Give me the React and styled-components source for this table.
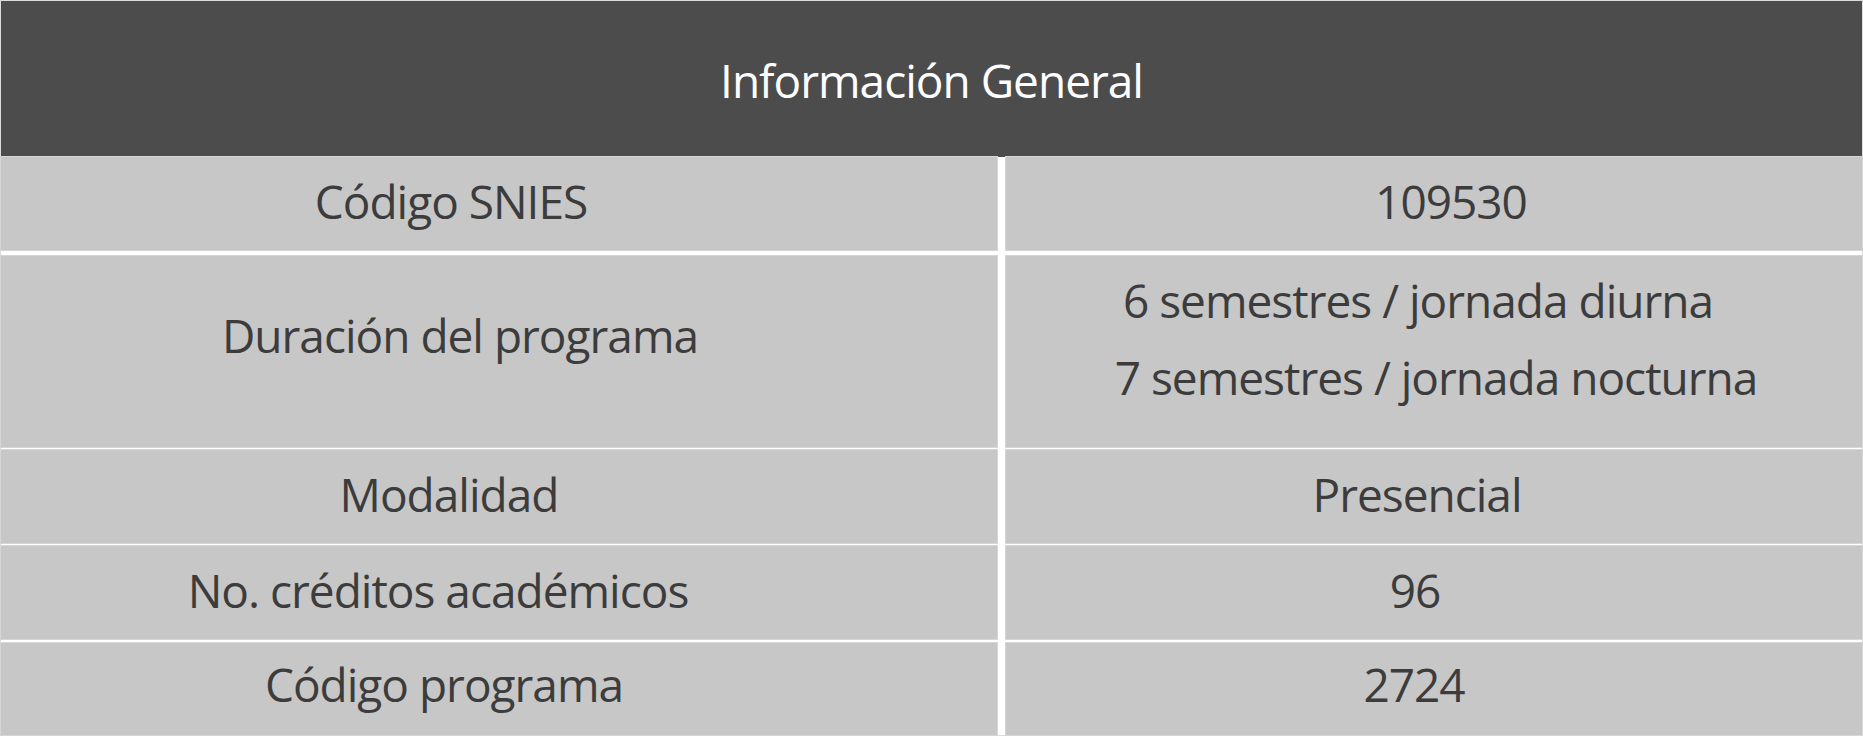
import React from "react";
import styled, { createGlobalStyle } from "styled-components";

const GlobalStyle = createGlobalStyle`
  html, body { margin: 0; padding: 0; background: #ffffff; }
  body { font-family: "Open Sans", "Liberation Sans", sans-serif; }
`;

const Table = styled.div`
  width: 1863px;
  box-sizing: border-box;
  border: 1px solid #dcdcdc;
  background: #ffffff;
  display: flex;
  flex-direction: column;
`;

const Header = styled.div`
  height: 156px;
  background: #4c4c4c;
  color: #ffffff;
  display: flex;
  align-items: center;
  justify-content: center;
  font-size: 46px;
  letter-spacing: -1px;
  padding-top: 2px;
  box-sizing: border-box;
`;

const Row = styled.div`
  display: grid;
  grid-template-columns: 996px 856px;
  column-gap: 9px;
  height: ${(p) => p.$h}px;
  margin-top: ${(p) => p.$gap}px;
`;

const Cell = styled.div`
  background: #c7c7c7;
  box-shadow: 0 0 0 1px #d6d6d6;
  color: #3c3c3c;
  font-size: 46px;
  letter-spacing: -1px;
  display: flex;
  flex-direction: column;
  align-items: center;
  justify-content: center;
  box-sizing: border-box;
  padding-left: ${(p) => Math.max(0, (p.$shift || 0) * 2)}px;
  padding-right: ${(p) => Math.max(0, -(p.$shift || 0) * 2)}px;
  padding-bottom: ${(p) => (p.$lift || 0) + 4}px;
`;

const Line = styled.span`
  display: block;
  line-height: 77px;
  white-space: nowrap;
  transform: translateX(${(p) => p.$dx || 0}px);
`;

const rows = [
  { h: 93, gap: 0, left: "Código SNIES", ls: -48, right: ["109530"], rs: 17 },
  {
    h: 191,
    gap: 6,
    left: "Duración del programa",
    ls: -39,
    right: ["6 semestres / jornada diurna", "7 semestres / jornada nocturna"],
    rs: -7,
    dx: [-9, 9],
    lift: 22,
    llift: 28,
  },
  { h: 93, gap: 3, left: "Modalidad", ls: -50, right: ["Presencial"], rs: -17 },
  { h: 93, gap: 3, left: "No. créditos académicos", ls: -61, right: ["96"], rs: -19 },
  { h: 92, gap: 4, left: "Código programa", ls: -55, right: ["2724"], rs: -20, lift: 6, llift: 6 },
];

export default function App() {
  return (
    <>
      <GlobalStyle />
      <Table>
        <Header>Información General</Header>
        {rows.map((r, i) => (
          <Row key={i} $h={r.h} $gap={r.gap}>
            <Cell $shift={r.ls} $lift={r.llift}>
              <Line>{r.left}</Line>
            </Cell>
            <Cell $shift={r.rs} $lift={r.lift}>
              {r.right.map((t, j) => (
                <Line key={j} $dx={r.dx ? r.dx[j] : 0}>
                  {t}
                </Line>
              ))}
            </Cell>
          </Row>
        ))}
      </Table>
    </>
  );
}
